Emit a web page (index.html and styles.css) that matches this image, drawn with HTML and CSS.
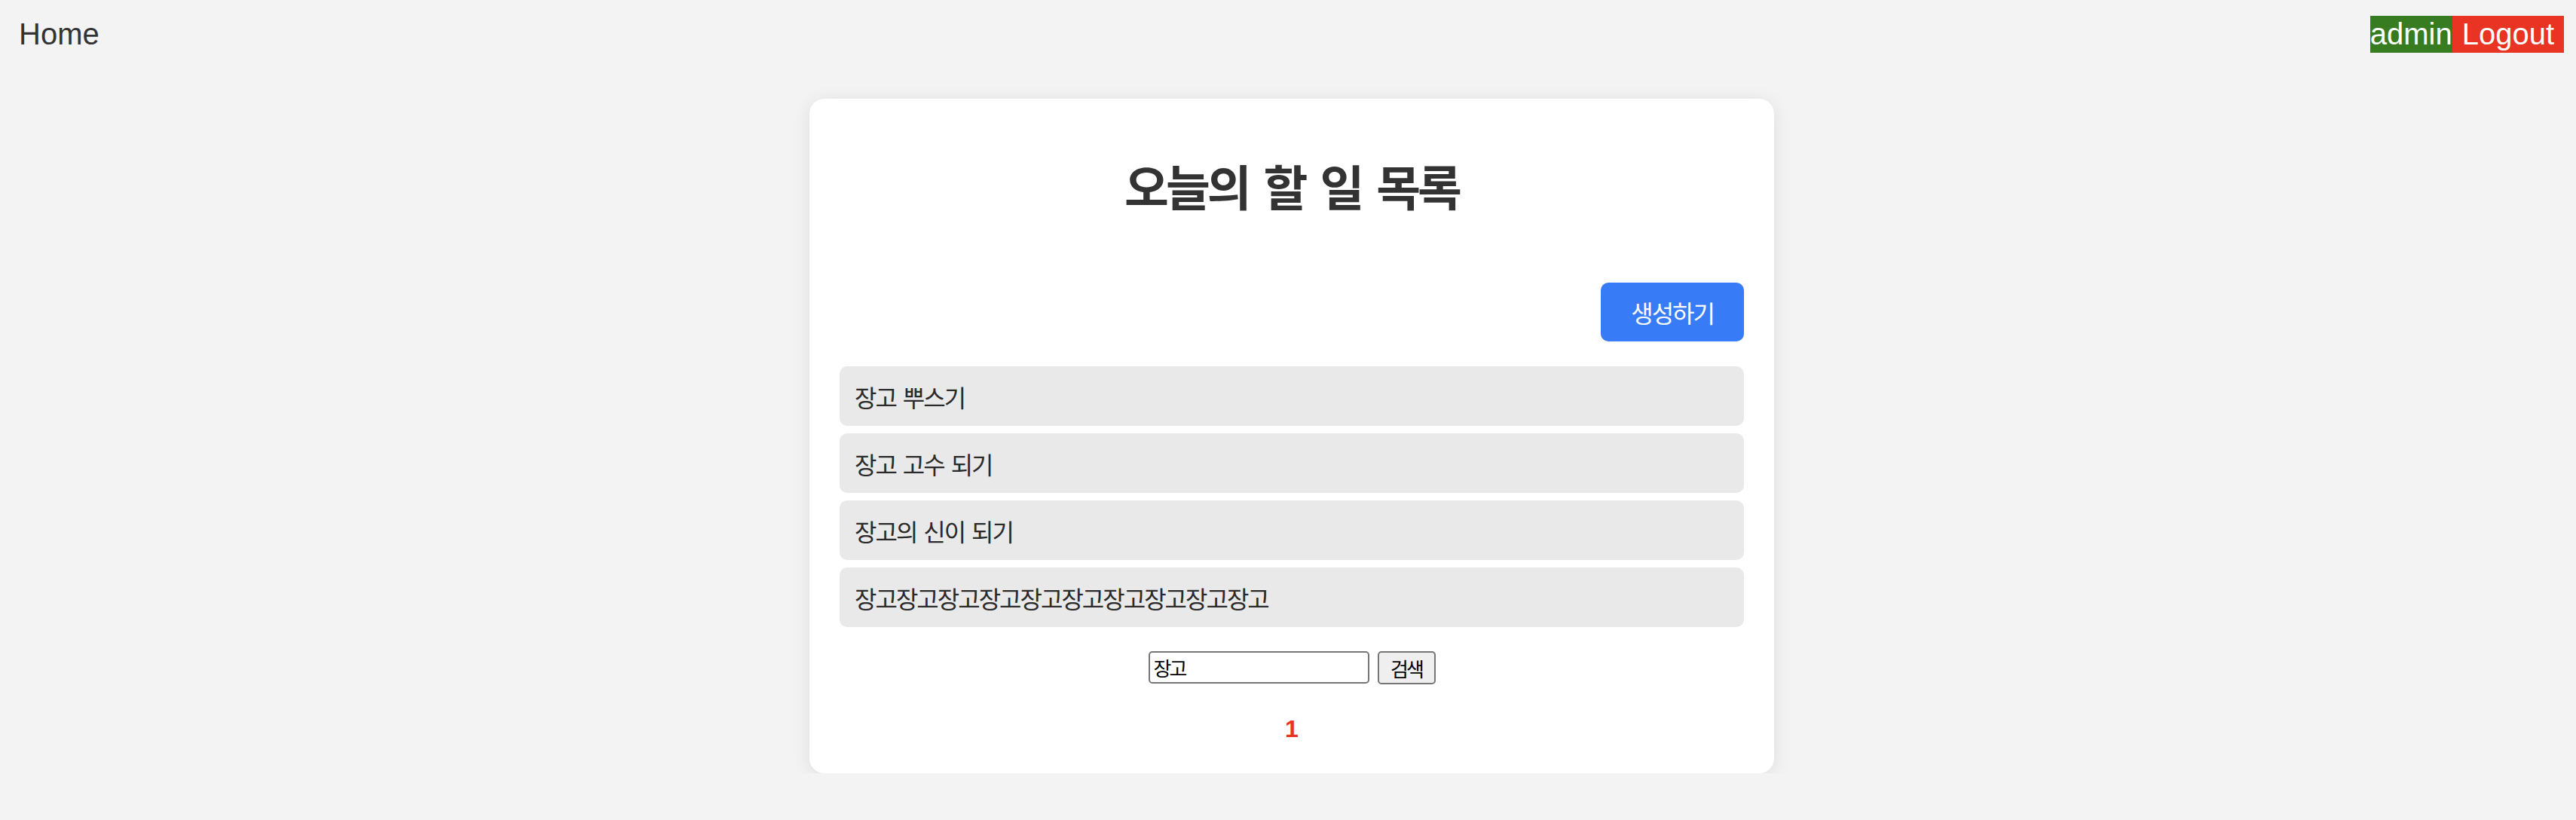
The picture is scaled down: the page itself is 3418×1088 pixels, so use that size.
FILE: index.html
```html
<!DOCTYPE html>
<html lang="ko">
<head>
<meta charset="utf-8">
<title>오늘의 할 일 목록</title>
<link rel="stylesheet" href="styles.css">
</head>
<body>
<header class="nav">
  <a class="home" href="#">Home</a>
  <div class="user">
    <span class="admin">admin</span><a class="logout" href="#">Logout</a>
  </div>
</header>
<main class="main">
  <section class="card">
    <h1 class="title">오늘의 할 일 목록</h1>
    <div class="actions">
      <a class="create" href="#">생성하기</a>
    </div>
    <ul class="list">
      <li class="item">장고 뿌스기</li>
      <li class="item">장고 고수 되기</li>
      <li class="item">장고의 신이 되기</li>
      <li class="item">장고장고장고장고장고장고장고장고장고장고</li>
    </ul>
    <form class="search">
      <input class="search-input" type="text" value="장고">
      <button class="search-btn" type="button">검색</button>
    </form>
    <div class="pages"><span class="page current">1</span></div>
  </section>
</main>
</body>
</html>
```
FILE: styles.css
```css
html, body {
  margin: 0;
  padding: 0;
}
body {
  background: #f3f3f3;
  font-family: "Liberation Sans", "Noto Sans CJK KR", sans-serif;
  color: #333;
}
.nav {
  display: flex;
  justify-content: space-between;
  align-items: flex-start;
  padding: 21px 16px 0 25px;
  height: 50px;
}
.home {
  font-size: 40px;
  line-height: 48px;
  color: #333;
  text-decoration: none;
}
.user {
  display: flex;
  font-size: 40px;
  line-height: 49px;
}
.admin {
  background: #387c22;
  color: #fff;
}
.logout {
  background: #e93323;
  color: #fff;
  text-decoration: none;
  padding: 0 13px;
}
.main {
  padding: 60px 0 0 10px;
}
.card {
  width: 1200px;
  margin: 0 auto;
  padding: 40px;
  background: #fff;
  border-radius: 20px;
  box-shadow: 0 4px 24px rgba(0, 0, 0, 0.09);
}
.title {
  margin: 36px 0 0;
  font-size: 64px;
  line-height: 76px;
  font-weight: 700;
  letter-spacing: -4px;
  word-spacing: 6px;
  text-align: center;
  color: #333;
  font-family: "Noto Sans CJK KR", sans-serif;
}
.actions {
  margin-top: 92px;
  display: flex;
  justify-content: flex-end;
}
.create {
  display: flex;
  align-items: center;
  height: 78px;
  padding: 0 40px;
  background: #377cf6;
  color: #fff;
  border-radius: 10px;
  font-size: 32px;
  letter-spacing: -2px;
  text-decoration: none;
  font-family: "Noto Sans CJK KR", sans-serif;
}
.list {
  list-style: none;
  margin: 33px 0 0;
  padding: 0;
  display: flex;
  flex-direction: column;
  gap: 10px;
}
.item {
  display: flex;
  align-items: center;
  height: 79px;
  padding: 0 20px;
  background: #e9e9e9;
  border-radius: 10px;
  font-size: 32px;
  letter-spacing: -2px;
  word-spacing: 2px;
  color: #2a2a2a;
  font-family: "Noto Sans CJK KR", sans-serif;
}
.search {
  margin-top: 32px;
  display: flex;
  justify-content: center;
  gap: 11px;
}
.search-input {
  box-sizing: border-box;
  width: 293px;
  height: 43px;
  border: 2px solid #767676;
  border-radius: 5px;
  padding: 0 5px;
  font-size: 26px;
  letter-spacing: -3px;
  color: #000;
  font-family: "Noto Sans CJK KR", sans-serif;
}
.search-btn {
  box-sizing: border-box;
  width: 77px;
  height: 44px;
  border: 2px solid #767676;
  border-radius: 5px;
  background: #efefef;
  padding: 0;
  font-size: 26px;
  letter-spacing: -3px;
  color: #000;
  font-family: "Noto Sans CJK KR", sans-serif;
}
.pages {
  margin-top: 40px;
  text-align: center;
  font-size: 32px;
  line-height: 38px;
}
.page {
  font-weight: 700;
  color: #e93323;
}
```
